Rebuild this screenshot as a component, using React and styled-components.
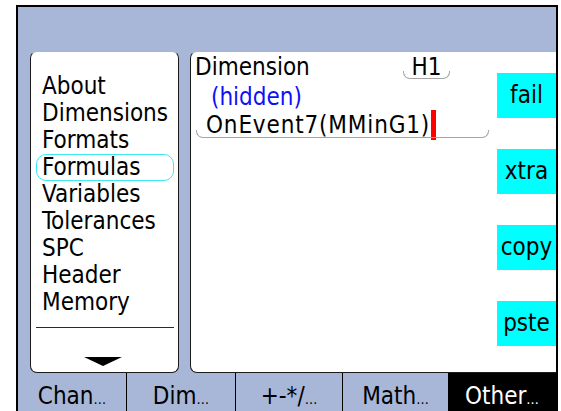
import React from 'react';
import styled, { createGlobalStyle } from 'styled-components';

const Global = createGlobalStyle`
  html, body { margin: 0; padding: 0; background: #fff; }
  body { font-family: "DejaVu Sans Condensed", "DejaVu Sans", sans-serif; }
`;

const Frame = styled.div`
  box-sizing: border-box;
  margin: 5px 0 0 16px;
  width: 542px;
  height: 406px;
  border: 2px solid #000;
  border-bottom: none;
  background: #a8b7d7;
  display: grid;
  grid-template-rows: 1fr 38px;
  font-family: "DejaVu Sans Condensed", "DejaVu Sans", sans-serif;
  font-stretch: condensed;
  font-size: 24px;
  color: #000;
`;

const Workspace = styled.div`
  display: flex;
  gap: 11px;
  padding: 44px 0 0 12px;
  min-height: 0;
`;

const Panel = styled.div`
  box-sizing: border-box;
  background: #fff;
  border: 1px solid #1a1a1a;
  border-top-color: #b4b4b4;
  border-radius: 7px;
`;

const MenuPanel = styled(Panel)`
  width: 149px;
  flex: none;
  padding: 21px 4px 0 5px;
  display: flex;
  flex-direction: column;
`;

const MenuItem = styled.div`
  box-sizing: border-box;
  height: 27px;
  line-height: 25px;
  padding-left: 5px;
  border: 1px solid ${p => (p.$active ? '#3ee8f0' : 'transparent')};
  border-radius: 10px;
  white-space: nowrap;
`;

const Separator = styled.div`
  height: 1px;
  background: #2a2a2a;
  margin-top: 11px;
`;

const ArrowBox = styled.div`
  display: flex;
  justify-content: center;
  margin-top: 29px;
  padding-right: 4px;
`;

const MainPanel = styled(Panel)`
  flex: 1;
  border-right: none;
  border-radius: 7px 0 0 7px;
  display: flex;
  min-width: 0;
`;

const Editor = styled.div`
  flex: 1;
  padding: 2px 0 0 4px;
  display: flex;
  flex-direction: column;
`;

const HeaderRow = styled.div`
  display: grid;
  grid-template-columns: 208px 47px;
  height: 30px;
  line-height: 27px;
`;

const Field = styled.div`
  position: relative;
  box-sizing: border-box;
  &::after {
    content: '';
    position: absolute;
    left: 0;
    right: 0;
    bottom: 0;
    height: 7px;
    border: 1px solid #a4a4a4;
    border-top: none;
    border-radius: 0 0 7px 7px;
  }
`;

const TagField = styled(Field)`
  height: 25px;
  text-align: center;
`;

const Hidden = styled.div`
  height: 28px;
  line-height: 27px;
  padding-left: 16px;
  color: #1010f4;
`;

const FormulaField = styled(Field)`
  width: 293px;
  height: 26px;
  margin-left: 1px;
  padding-left: 10px;
  line-height: 27px;
  letter-spacing: 0.85px;
  white-space: nowrap;
`;

const Cursor = styled.span`
  display: inline-block;
  width: 5px;
  height: 30px;
  margin: -3px 0 -3px 1px;
  vertical-align: -4px;
  background: #f00;
`;

const Actions = styled.div`
  width: 59px;
  flex: none;
  padding-top: 21px;
  display: flex;
  flex-direction: column;
  gap: 31px;
`;

const ActionButton = styled.div`
  height: 45px;
  line-height: 45px;
  background: #00ffff;
  text-align: center;
  white-space: nowrap;
`;

const TabBar = styled.div`
  display: grid;
  grid-template-columns: 108px 109px 107px 106px 1fr;
`;

const Tab = styled.div`
  box-sizing: border-box;
  padding-top: 8px;
  line-height: 30px;
  text-align: center;
  white-space: nowrap;
  border-left: ${p => (p.$first || p.$active ? 'none' : '1px solid #000')};
  background: ${p => (p.$active ? '#000' : 'transparent')};
  color: ${p => (p.$active ? '#fff' : '#000')};
`;

const Dots = styled.span`
  font-size: 14px;
`;

const menu = ['About', 'Dimensions', 'Formats', 'Formulas', 'Variables', 'Tolerances', 'SPC', 'Header', 'Memory'];
const actions = ['fail', 'xtra', 'copy', 'pste'];
const tabs = ['Chan', 'Dim', '+-*/', 'Math', 'Other'];

export default function App() {
  return (
    <>
      <Global />
      <Frame>
        <Workspace>
          <MenuPanel>
            {menu.map(m => (
              <MenuItem key={m} $active={m === 'Formulas'}>{m}</MenuItem>
            ))}
            <Separator />
            <ArrowBox>
              <svg width="38" height="9" viewBox="0 0 38 9">
                <polygon points="0,0 38,0 19,9" fill="#000" />
              </svg>
            </ArrowBox>
          </MenuPanel>
          <MainPanel>
            <Editor>
              <HeaderRow>
                <span>Dimension</span>
                <TagField>H1</TagField>
              </HeaderRow>
              <Hidden>(hidden)</Hidden>
              <FormulaField>
                OnEvent7(MMinG1)<Cursor />
              </FormulaField>
            </Editor>
            <Actions>
              {actions.map(a => (
                <ActionButton key={a}>{a}</ActionButton>
              ))}
            </Actions>
          </MainPanel>
        </Workspace>
        <TabBar>
          {tabs.map((t, i) => (
            <Tab key={t} $first={i === 0} $active={t === 'Other'}>
              {t}<Dots>…</Dots>
            </Tab>
          ))}
        </TabBar>
      </Frame>
    </>
  );
}
